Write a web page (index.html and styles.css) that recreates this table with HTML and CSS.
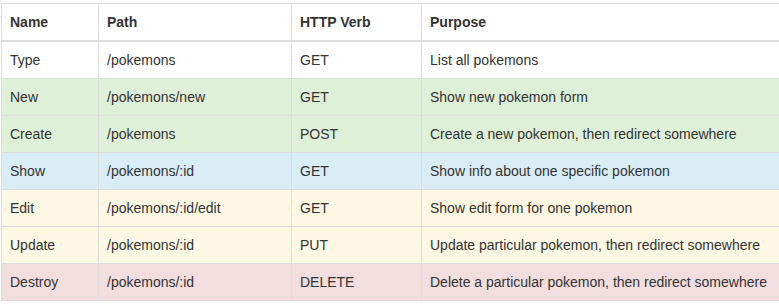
FILE: index.html
```html
<!DOCTYPE html>
<html lang="en">
<head>
  <meta charset="UTF-8" />
  <meta name="viewport" content="width=device-width, initial-scale=1.0" />
  <title>Pokemon Routes</title>
  <link rel="stylesheet" href="styles.css">
</head>
<body>
  <table class="routes-table">
    <thead>
      <tr>
        <th class="col-name">Name</th>
        <th class="col-path">Path</th>
        <th class="col-verb">HTTP Verb</th>
        <th>Purpose</th>
      </tr>
    </thead>
    <tbody>
      <tr>
        <td>Type</td>
        <td>/pokemons</td>
        <td>GET</td>
        <td>List all pokemons</td>
      </tr>
      <tr class="success">
        <td>New</td>
        <td>/pokemons/new</td>
        <td>GET</td>
        <td>Show new pokemon form</td>
      </tr>
      <tr class="success">
        <td>Create</td>
        <td>/pokemons</td>
        <td>POST</td>
        <td>Create a new pokemon, then redirect somewhere</td>
      </tr>
      <tr class="info">
        <td>Show</td>
        <td>/pokemons/:id</td>
        <td>GET</td>
        <td>Show info about one specific pokemon</td>
      </tr>
      <tr class="warning">
        <td>Edit</td>
        <td>/pokemons/:id/edit</td>
        <td>GET</td>
        <td>Show edit form for one pokemon</td>
      </tr>
      <tr class="warning">
        <td>Update</td>
        <td>/pokemons/:id</td>
        <td>PUT</td>
        <td>Update particular pokemon, then redirect somewhere</td>
      </tr>
      <tr class="danger">
        <td>Destroy</td>
        <td>/pokemons/:id</td>
        <td>DELETE</td>
        <td>Delete a particular pokemon, then redirect somewhere</td>
      </tr>
    </tbody>
  </table>
</body>
</html>
```

FILE: styles.css
```css
body {
  font-family: "Liberation Sans", Arial, sans-serif;
  font-size: 14px;
  line-height: 1.42857;
  color: #333;
  background: #fff;
  margin: 0;
  padding: 3px 0 0 1px;
  overflow: hidden;
}

/* table runs on past the right edge, so no right border */
.routes-table {
  border-collapse: collapse;
  border-spacing: 0;
  width: 778px;
  border: 1px solid #ddd;
  border-right: none;
}

.routes-table th,
.routes-table td {
  padding: 8px;
  line-height: 20px;
  text-align: left;
  vertical-align: top;
  border: 1px solid #ddd;
}

.routes-table th:last-child,
.routes-table td:last-child {
  border-right: none;
}

.routes-table th {
  font-weight: bold;
  border-bottom: 2px solid #ddd;
}

.col-name {
  width: 80px;
}

.col-path {
  width: 176px;
}

.col-verb {
  width: 113px;
}

/* Row states */
.routes-table tr.success td {
  background: #dff0d8;
}

.routes-table tr.info td {
  background: #d9edf7;
}

.routes-table tr.warning td {
  background: #fcf8e3;
}

.routes-table tr.danger td {
  background: #f2dede;
}
```
